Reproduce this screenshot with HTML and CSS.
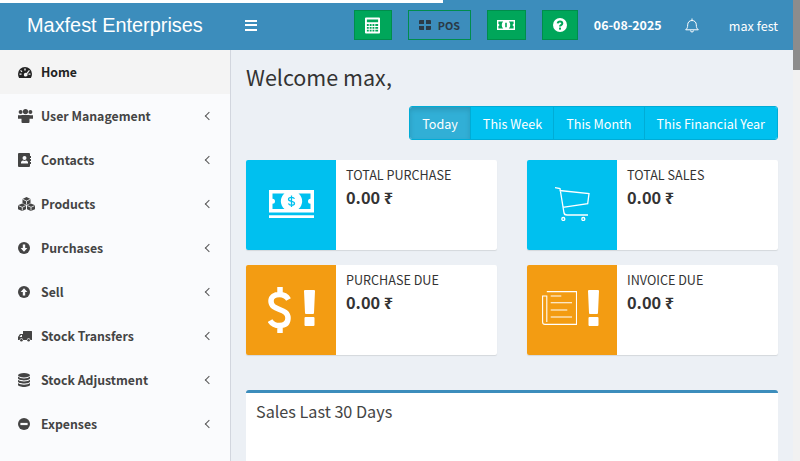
FILE: index.html
```html
<!DOCTYPE html>
<html lang="en">
<head>
  <meta charset="UTF-8" />
  <title>Maxfest Enterprises</title>
  <link rel="stylesheet" href="styles.css">
</head>

<body>
  <div class="top-strip"></div>

  <header class="topbar">
    <div class="brand">Maxfest Enterprises</div>
    <div class="burger"><span></span><span></span><span></span></div>
    <div class="top-actions">
      <a class="tbtn calc">
        <svg width="15" height="17" viewBox="0 0 16 17"><path fill="#fff" fill-rule="evenodd" d="M1 0h14a1 1 0 0 1 1 1v15a1 1 0 0 1-1 1H1a1 1 0 0 1-1-1V1a1 1 0 0 1 1-1zM2 2v3h12V2zM2 7v2h2V7zm3 0v2h2V7zm3 0v2h2V7zm3 0v2h3V7zM2 10v2h2v-2zm3 0v2h2v-2zm3 0v2h2v-2zm3 0v2h3v-2zM2 13v2h2v-2zm3 0v2h2v-2zm3 0v2h2v-2zm3 0v2h3v-2z"/></svg>
      </a>
      <a class="tbtn pos">
        <svg width="12" height="10" viewBox="0 0 12 10"><path fill="#2b3a47" d="M0 1a1 1 0 0 1 1-1h4v4H0zM7 0h4a1 1 0 0 1 1 1v3H7zM0 6h5v4H1a1 1 0 0 1-1-1zM7 6h5v3a1 1 0 0 1-1 1H7z"/></svg>
        <span>POS</span>
      </a>
      <a class="tbtn cash">
        <svg width="18" height="10" viewBox="0 0 45 22.500" preserveAspectRatio="none"><path fill="#fff" fill-rule="evenodd" d="M0 0h45v22.500H0zM3.500 3.500V8.750a2.500 2.500 0 0 1 0 5V19H15.500A10 10 0 0 1 15.500 3.500zM41.500 3.500H29.500A10 10 0 0 1 29.500 19H41.500V13.750a2.500 2.500 0 0 1 0-5z"/><path fill="#00a65a" d="M20.500 6h4v10.500h-4z"/></svg>
      </a>
      <a class="tbtn help">
        <svg width="14" height="14" viewBox="0 0 14 14"><circle cx="7" cy="7" r="7" fill="#fff"/><path fill="none" stroke="#00a65a" stroke-width="2" d="M4.700 5.300C4.900 4 5.900 3.500 7 3.500c1.300 0 2.300.8 2.300 1.900 0 1.700-2.300 1.600-2.300 3.100"/><rect x="6" y="9.600" width="2" height="2" fill="#00a65a"/></svg>
      </a>
      <span class="today-date">06-08-2025</span>
      <svg class="bell" width="14" height="15" viewBox="0 0 14 15"><path fill="none" stroke="#fff" stroke-linejoin="round" d="M.7 11.800c1.500-1.300 2-2.500 2-5 0-2.600 1.800-4.300 4.300-4.300s4.300 1.700 4.300 4.300c0 2.500.5 3.700 2 5z"/><path fill="none" stroke="#fff" d="M7 .5v2M5.500 12.500a1.500 1.500 0 0 0 3 0"/></svg>
      <span class="user-name">max fest</span>
    </div>
  </header>

  <div class="wrap">
    <nav class="sidebar">
      <a class="nav-item active">
        <svg width="14" height="11" viewBox="0 0 14 11"><path fill="#222" fill-rule="evenodd" d="M7 0a7 7 0 0 1 7 7c0 1.500-.4 2.800-1.100 4H1.100A7.700 7.700 0 0 1 0 7a7 7 0 0 1 7-7zM6.300 1.500v2h1.400v-2zM3 3 2.200 3.800l1.400 1.400.8-.8zm8 0L8.400 6.100A1.800 1.800 0 1 0 9.300 7L11.800 3.800zM1.500 6.400v1.400h2V6.400zm9 0v1.400h2V6.400z"/></svg>
        <span class="nav-text">Home</span>
      </a>
      <a class="nav-item">
        <svg width="15" height="14" viewBox="0 0 15 14"><g fill="#444"><circle cx="2.600" cy="3" r="2"/><circle cx="12.400" cy="3" r="2"/><circle cx="7.500" cy="2.600" r="2.600"/><path d="M0 6.200h4v3.600H0zM11 6.200h4v3.600h-4zM3.500 6h8v7a1 1 0 0 1-1 1h-6a1 1 0 0 1-1-1z"/></g></svg>
        <span class="nav-text">User Management</span><span class="chev"></span>
      </a>
      <a class="nav-item">
        <svg width="13" height="14" viewBox="0 0 13 14"><path fill="#444" fill-rule="evenodd" d="M1 0h10a1 1 0 0 1 1 1v2h1v2h-1v1h1v2h-1v1h1v2h-1v2a1 1 0 0 1-1 1H1a1 1 0 0 1-1-1V1a1 1 0 0 1 1-1zm5.500 3a2 2 0 1 0 0 4 2 2 0 0 0 0-4zM3 10.500h7V9.300C10 8.500 9 7.700 8 7.500c-1 .5-2 .5-3 0-1 .2-2 1-2 1.800z"/></svg>
        <span class="nav-text">Contacts</span><span class="chev"></span>
      </a>
      <a class="nav-item">
        <svg width="17" height="14" viewBox="0 0 17 14"><g fill="#444"><path d="M8.500 0 12.500 2v4.200L8.500 8 4.500 6.200V2z"/><path d="M4.200 6.500 8 8.300V12.200L4.200 14 0 12.200V8.300z"/><path d="M12.800 6.500 17 8.300V12.200L12.800 14 9 12.200V8.300z"/></g><path fill="none" stroke="#fafbfd" stroke-width=".8" d="M4.500 2.200 8.500 4l4-1.800M8.500 4v3.500M.3 8.600l4 1.700L7.800 8.600M4.300 10.300V13.500M9.300 8.600l3.700 1.700 3.700-1.700M13 10.300V13.500"/></svg>
        <span class="nav-text">Products</span><span class="chev"></span>
      </a>
      <a class="nav-item">
        <svg width="12" height="12" viewBox="0 0 12 12"><circle cx="6" cy="6" r="6" fill="#444"/><path fill="#fafbfd" d="M4.800 2.500h2.400V6H9.400L6 9.700 2.600 6h2.200z"/></svg>
        <span class="nav-text">Purchases</span><span class="chev"></span>
      </a>
      <a class="nav-item">
        <svg width="12" height="12" viewBox="0 0 12 12"><circle cx="6" cy="6" r="6" fill="#444"/><path fill="#fafbfd" d="M4.800 9.500h2.400V6H9.400L6 2.300 2.600 6h2.200z"/></svg>
        <span class="nav-text">Sell</span><span class="chev"></span>
      </a>
      <a class="nav-item">
        <svg width="14" height="11" viewBox="0 0 14 11"><path fill="#444" fill-rule="evenodd" d="M5 0h8.500a.5.500 0 0 1 .5.500V9h-1.600a1.800 1.800 0 0 0-3.600 0H5.200a1.800 1.800 0 0 0-3.600 0H0V6l2-3h3zM3 4 1.500 6H4V4z"/><circle cx="3.400" cy="9.300" r="1.300" fill="#444"/><circle cx="10.600" cy="9.300" r="1.300" fill="#444"/></svg>
        <span class="nav-text">Stock Transfers</span><span class="chev"></span>
      </a>
      <a class="nav-item">
        <svg width="12" height="14" viewBox="0 0 12 14"><g fill="#444"><ellipse cx="6" cy="2.200" rx="6" ry="2.200"/><path d="M0 3.600C1 5 3.500 5.400 6 5.400s5-.4 6-1.800v1.700C12 6.500 9 7.400 6 7.400S0 6.500 0 5.300z"/><path d="M0 6.800C1 8 3.500 8.500 6 8.500s5-.5 6-1.700v1.700c0 1.200-3 2-6 2s-6-.8-6-2z"/><path d="M0 10c1 1.200 3.500 1.700 6 1.700s5-.5 6-1.700v1.800c0 1.300-3 2.200-6 2.200s-6-.9-6-2.200z"/></g></svg>
        <span class="nav-text">Stock Adjustment</span><span class="chev"></span>
      </a>
      <a class="nav-item">
        <svg width="12" height="12" viewBox="0 0 12 12"><circle cx="6" cy="6" r="6" fill="#444"/><rect x="2.400" y="4.900" width="7.200" height="2.200" fill="#fafbfd"/></svg>
        <span class="nav-text">Expenses</span><span class="chev"></span>
      </a>
    </nav>

    <main class="content">
      <h1 class="welcome">Welcome max,</h1>

      <div class="range-row">
        <div class="btn-group">
          <a class="range-btn active">Today</a>
          <a class="range-btn">This Week</a>
          <a class="range-btn">This Month</a>
          <a class="range-btn">This Financial Year</a>
        </div>
      </div>

      <div class="stat-grid">
        <div class="stat-box">
          <div class="stat-ico blue">
            <svg width="45" height="28" viewBox="0 0 45 28"><path fill="#fff" fill-rule="evenodd" d="M0 0h45v22.500H0zM3.500 3.500V8.750a2.500 2.500 0 0 1 0 5V19H15.500A10 10 0 0 1 15.500 3.500zM41.500 3.500H29.500A10 10 0 0 1 29.500 19H41.500V13.750a2.500 2.500 0 0 1 0-5z"/><path fill="#fff" d="M0 25.200h45V28H0z"/><path fill="none" stroke="#00c0ef" stroke-width="1.300" d="M25.500 8.800C25 7.800 24 7.300 22.500 7.300c-1.700 0-3 .8-3 2 0 2.800 6 1.200 6 4 0 1.200-1.300 2-3 2-1.500 0-2.600-.6-3.100-1.700M22.500 5.500v11.400"/></svg>
          </div>
          <div class="stat-body"><div class="stat-label">TOTAL PURCHASE</div><div class="stat-num">0.00 ₹</div></div>
        </div>
        <div class="stat-box">
          <div class="stat-ico blue">
            <svg width="35" height="34" viewBox="0 0 35 34"><path fill="none" stroke="#fff" stroke-width="1.300" d="M0 .7l5 .8 4 24.500q.4 2 3 2h21M4.500 3.500 34 6.500l-1.300 10.200-25 3.600"/><circle cx="8.300" cy="32" r="1.500" fill="none" stroke="#fff" stroke-width="1.300"/><circle cx="28.300" cy="32" r="1.500" fill="none" stroke="#fff" stroke-width="1.300"/></svg>
          </div>
          <div class="stat-body"><div class="stat-label">TOTAL SALES</div><div class="stat-num">0.00 ₹</div></div>
        </div>
        <div class="stat-box">
          <div class="stat-ico orange due-ico">
            <svg class="dollar" width="23" height="46" viewBox="0 0 23 46"><path fill="none" stroke="#fff" stroke-width="5.500" d="M20.500 12.500C18.500 9 16 7.500 11.500 7.500 6.500 7.500 3 10 3 14 3 24.500 20 20.500 20 31 20 36 17 38.500 11.500 38.500 7 38.500 4 37 2 33.500M12 0V7.500M12 38.500V46"/></svg>
            <svg width="11" height="36" viewBox="0 0 11 36"><path fill="#fff" d="M1 0h9a1 1 0 0 1 1 1l-1 22a1 1 0 0 1-1 1H2a1 1 0 0 1-1-1L0 1a1 1 0 0 1 1-1zM1.500 27h8a1 1 0 0 1 1 1v7a1 1 0 0 1-1 1h-8a1 1 0 0 1-1-1v-7a1 1 0 0 1 1-1z"/></svg>
          </div>
          <div class="stat-body"><div class="stat-label">PURCHASE DUE</div><div class="stat-num">0.00 ₹</div></div>
        </div>
        <div class="stat-box">
          <div class="stat-ico orange invoice-ico">
            <svg width="35" height="34" viewBox="0 0 35 34"><g fill="none" stroke="#fff" stroke-width="1.100"><path d="M4.800.6h29.700v32.800H3M3 33.400a2.500 2.500 0 0 1-2.400-2.500V5h4.200v26"/><path d="M8.700 5h10.600M8.700 11.700H30M8.700 19h16.600M8.700 26H30"/></g></svg>
            <svg width="11" height="36" viewBox="0 0 11 36"><path fill="#fff" d="M1 0h9a1 1 0 0 1 1 1l-1 22a1 1 0 0 1-1 1H2a1 1 0 0 1-1-1L0 1a1 1 0 0 1 1-1zM1.500 27h8a1 1 0 0 1 1 1v7a1 1 0 0 1-1 1h-8a1 1 0 0 1-1-1v-7a1 1 0 0 1 1-1z"/></svg>
          </div>
          <div class="stat-body"><div class="stat-label">INVOICE DUE</div><div class="stat-num">0.00 ₹</div></div>
        </div>
      </div>

      <section class="sales-box">
        <h3 class="sales-title">Sales Last 30 Days</h3>
      </section>
    </main>
  </div>

  <div class="scroll-track"><div class="scroll-thumb"></div></div>
</body>
</html>
```

FILE: styles.css
```css
html, body {
  margin: 0;
  height: 461px;
  overflow: hidden;
}

body {
  font-family: "Noto Sans CJK SC", "Noto Sans", sans-serif;
  font-size: 12.6px;
  color: #333;
  background: #ecf0f5;
  padding-right: 7px;
}

/* bande blanche en haut, par dessus le header */
.top-strip {
  position: absolute;
  left: 0;
  top: 0;
  width: 443px;
  height: 3px;
  background: #fff;
}

.scroll-track {
  position: absolute;
  right: 0;
  top: 0;
  width: 7px;
  height: 461px;
  background: #f1f1f1;
}

.scroll-thumb {
  height: 70px;
  background: #8c8c8c;
}

/* HEADER */
.topbar {
  display: flex;
  align-items: center;
  height: 50px;
  background: #3c8dbc;
  color: #fff;
}

.brand {
  width: 230px;
  padding-left: 27px;
  box-sizing: border-box;
  font-family: "Liberation Sans", sans-serif;
  font-size: 19.900px;
  line-height: 50px;
}

.burger {
  display: flex;
  flex-direction: column;
  gap: 2.500px;
  width: 12px;
  margin-left: 15px;
}

.burger span {
  height: 2px;
  background: #fff;
}

.top-actions {
  display: flex;
  align-items: center;
  margin-left: auto;
  padding-right: 15px;
}

.tbtn {
  display: flex;
  align-items: center;
  justify-content: center;
  box-sizing: border-box;
  height: 30px;
  background: #00a65a;
  border: 1px solid #008d4c;
}

.calc { width: 38px; margin-right: 16px; }
.pos { width: 63px; gap: 7px; margin-right: 16px; background: transparent; color: #2b3a47; font-size: 10.800px; font-weight: 700; }
.cash { width: 39px; margin-right: 16px; }
.help { width: 36px; margin-right: 16px; }

.today-date {
  font-weight: 700;
  font-size: 12.4px;
  width: 68px;
  white-space: nowrap;
}

.bell {
  margin-left: 23px;
}

.user-name {
  margin-left: 30px;
  font-size: 12.6px;
  white-space: nowrap;
}

/* SIDEBAR */
.wrap {
  display: flex;
}

.sidebar {
  flex: 0 0 230px;
  height: 411px;
  overflow: hidden;
  background: #fafbfd;
  border-right: 1px solid #d2d6de;
}

.nav-item {
  display: grid;
  grid-template-columns: 23px 1fr auto;
  align-items: center;
  height: 44px;
  padding-left: 18px;
  color: #444;
  font-weight: 600;
  font-size: 12.3px;
}

.nav-item.active {
  background: #f4f4f4;
  color: #222;
}

.chev {
  width: 5px;
  height: 5px;
  margin-right: 18px;
  border-left: 1px solid #555;
  border-bottom: 1px solid #555;
  transform: rotate(45deg);
}

/* CONTENT */
.content {
  flex: 1;
  padding: 0 15px;
  min-width: 0;
}

.welcome {
  margin: 0;
  padding-top: 11px;
  font-size: 21.500px;
  line-height: 32px;
  font-weight: 400;
}

.range-row {
  display: flex;
  justify-content: flex-end;
  margin-top: 13px;
}

.btn-group {
  display: flex;
  height: 34px;
  border: 1px solid #00acd6;
  border-radius: 3px;
  box-sizing: border-box;
  overflow: hidden;
}

.range-btn {
  display: flex;
  align-items: center;
  padding: 0 12px;
  background: #00c0ef;
  color: #fff;
  border-left: 1px solid #00acd6;
}

.range-btn:first-child {
  border-left: none;
}

.range-btn:nth-child(2) {
  padding-right: 11px;
}

.range-btn.active {
  background: #31afd6;
  box-shadow: inset 0 3px 5px rgba(0, 0, 0, .125);
}

.stat-grid {
  display: grid;
  grid-template-columns: 251px 251px;
  justify-content: space-between;
  row-gap: 15px;
  margin-top: 20px;
}

.stat-box {
  display: flex;
  height: 90px;
  background: #fff;
  border-radius: 2px;
  box-shadow: 0 1px 1px rgba(0, 0, 0, .1);
  overflow: hidden;
}

.stat-ico {
  flex: 0 0 90px;
  display: flex;
  align-items: center;
  justify-content: center;
  gap: 11px;
  padding-bottom: 2px;
  box-sizing: border-box;
}

.blue { background: #00c0ef; }
.orange { background: #f39c12; }

.due-ico {
  gap: 13px;
  padding-bottom: 4px;
}

.dollar {
  margin-top: 4px;
}

.invoice-ico {
  padding-bottom: 4px;
  padding-right: 3px;
}

.stat-body {
  padding: 5px 10px;
}

.stat-label {
  line-height: 20px;
}

.stat-num {
  font-size: 16.3px;
  font-weight: 700;
  line-height: 24px;
}

.sales-box {
  margin-top: 35px;
  height: 68px;
  background: #fff;
  border-top: 3px solid #3c8dbc;
  border-radius: 3px 3px 0 0;
}

.sales-title {
  margin: 0;
  padding: 8px 10px;
  font-size: 16.2px;
  font-weight: 400;
  line-height: 20px;
  color: #444;
}
```
